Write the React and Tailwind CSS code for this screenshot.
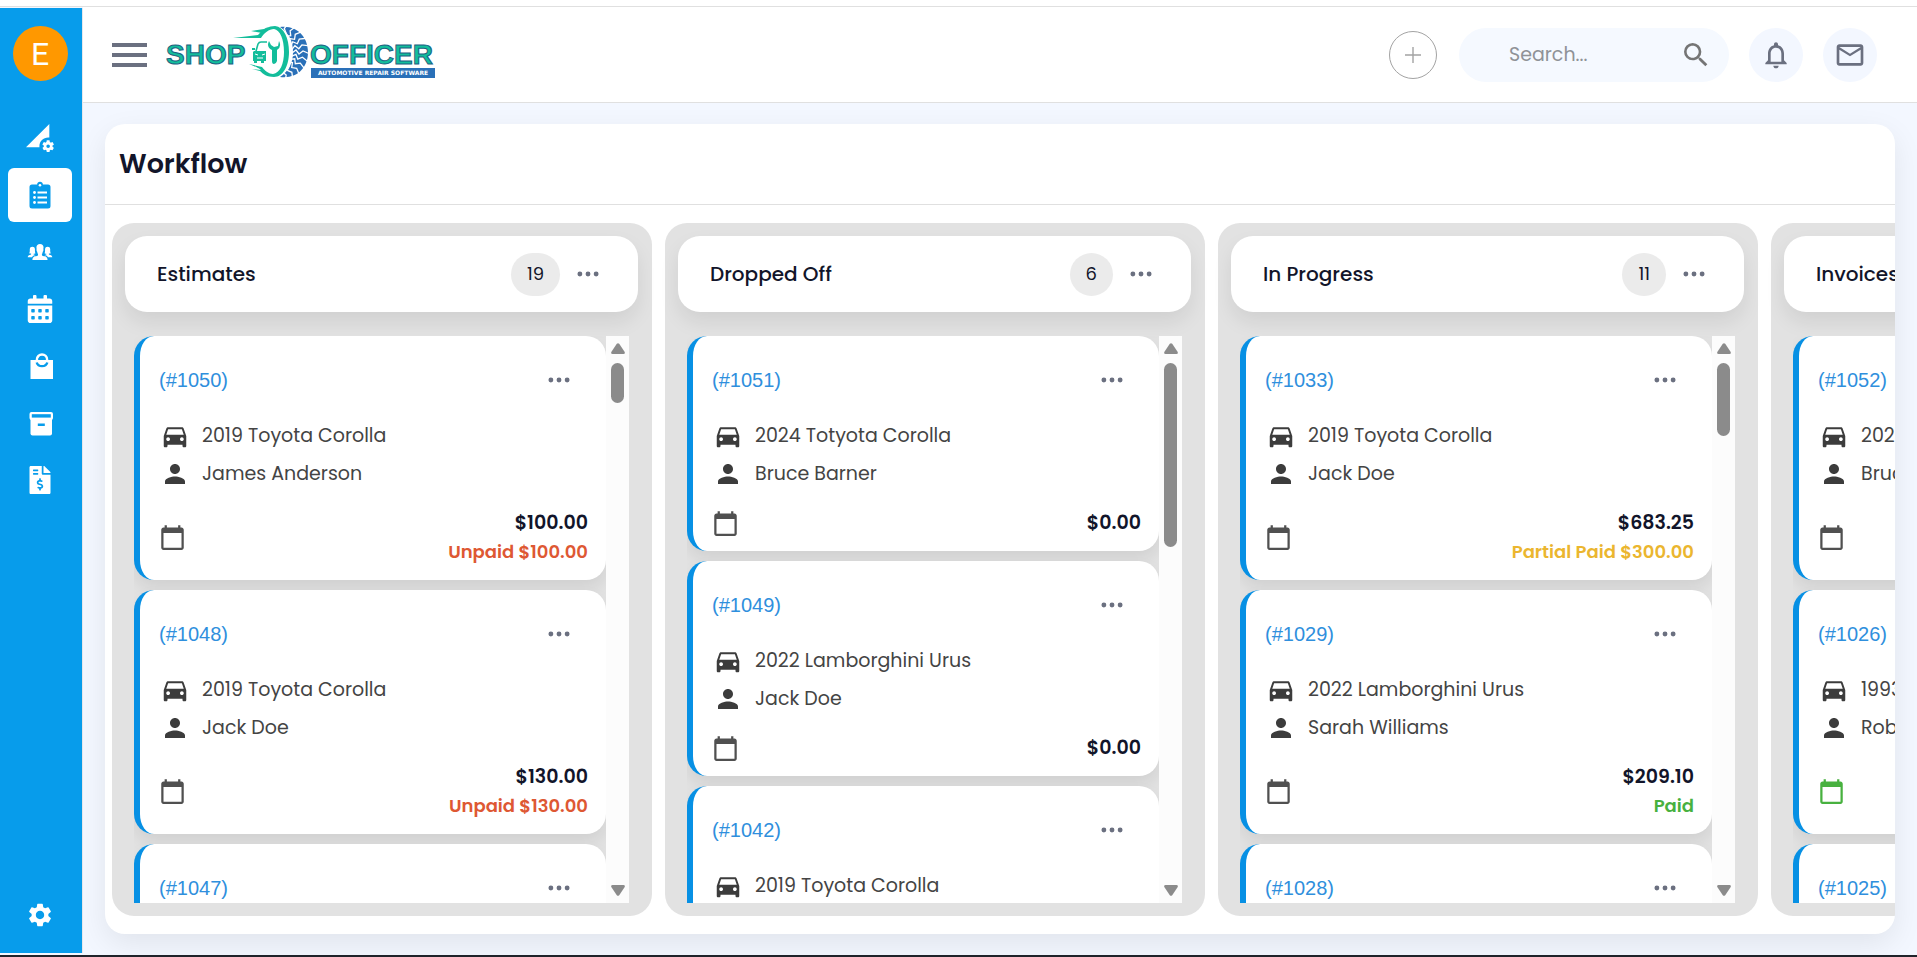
import {
  MdPermDataSetting,
  MdSettings,
  MdSearch,
  MdNotificationsNone,
  MdMailOutline,
  MdDirectionsCar,
  MdPerson,
  MdCalendarToday,
} from "react-icons/md";
import { FaCalendarAlt, FaFileInvoiceDollar } from "react-icons/fa";
import { BsThreeDots } from "react-icons/bs";
import { IoIosPeople } from "react-icons/io";

const ClipboardIcon = () => (
  <svg viewBox="0 0 28 28" className="w-7 h-7">
    <path
      d="M14 .8a3 3 0 0 1 2.9 2.7H22a2.5 2.5 0 0 1 2.5 2.5V25a2.5 2.5 0 0 1-2.5 2.5H6A2.5 2.500 0 0 1 3.5 25V6A2.5 2.5 0 0 1 6 3.5H11.1A3 3 0 0 1 14 .8Z"
      fill="currentColor"
    />
    <g fill="#fff">
      <circle cx="14" cy="4.2" r="1.3" />
      <rect x="11.5" y="10.5" width="9.5" height="2" />
      <rect x="11.5" y="15.5" width="9.5" height="2" />
      <rect x="11.5" y="20.5" width="9.5" height="2" />
      <circle cx="8.5" cy="11.5" r="1.4" />
      <circle cx="8.5" cy="16.5" r="1.4" />
      <circle cx="8.5" cy="21.5" r="1.4" />
    </g>
  </svg>
);

const BagIcon = () => (
  <svg viewBox="0 0 28 28" className="w-7 h-7">
    <path d="M4.5 8H27V27H4.5Z" fill="currentColor" />
    <circle cx="16" cy="7.5" r="5" fill="none" stroke="currentColor" strokeWidth="2.6" />
    <path d="M12.3 8a3.7 4 0 0 1 7.4 0Z" fill="#079ceb" />
    <path d="M10.7 10.5a5.5 5 0 0 0 10.6 0" fill="none" stroke="#079ceb" strokeWidth="2.4" />
  </svg>
);

const ArchiveIcon = () => (
  <svg viewBox="0 0 28 28" className="w-7 h-7" fill="currentColor">
    <path d="M4.5 9H26V24.5a2 2 0 0 1-2 2H6.5a2 2 0 0 1-2-2V9Z" />
    <rect x="3.5" y="3" width="23.5" height="8" rx="2" />
    <rect x="5.8" y="5.2" width="19" height="3.4" fill="#079ceb" />
    <rect x="11.8" y="14.5" width="7" height="2.5" fill="#079ceb" />
  </svg>
);

const navLinks = [
  { name: "Dashboard", path: "/dashboard", icon: <MdPermDataSetting className="w-7 h-7" /> },
  { name: "Workflow", path: "/workflow", icon: <ClipboardIcon />, active: true },
  { name: "Customers", path: "/customers", icon: <IoIosPeople className="w-7 h-7" /> },
  { name: "Calendar", path: "/calendar", icon: <FaCalendarAlt className="w-7 h-7" /> },
  { name: "Orders", path: "/orders", icon: <BagIcon /> },
  { name: "Inventory", path: "/inventory", icon: <ArchiveIcon /> },
  { name: "Invoices", path: "/invoices", icon: <FaFileInvoiceDollar className="w-7 h-7" /> },
];

const columns = [
  {
    title: "Estimates",
    count: 19,
    thumb: "h-10",
    cards: [
      { id: 1050, car: "2019 Toyota Corolla", customer: "James Anderson", total: "$100.00", status: "unpaid", note: "Unpaid $100.00" },
      { id: 1048, car: "2019 Toyota Corolla", customer: "Jack Doe", total: "$130.00", status: "unpaid", note: "Unpaid $130.00" },
      { id: 1047, car: "2022 Lamborghini Urus", customer: "Jack Doe", total: "$0.00" },
    ],
  },
  {
    title: "Dropped Off",
    count: 6,
    thumb: "h-[184px]",
    cards: [
      { id: 1051, car: "2024 Totyota Corolla", customer: "Bruce Barner", total: "$0.00" },
      { id: 1049, car: "2022 Lamborghini Urus", customer: "Jack Doe", total: "$0.00" },
      { id: 1042, car: "2019 Toyota Corolla", customer: "Jack Doe", total: "$0.00" },
    ],
  },
  {
    title: "In Progress",
    count: 11,
    thumb: "h-[73px]",
    cards: [
      { id: 1033, car: "2019 Toyota Corolla", customer: "Jack Doe", total: "$683.25", status: "partial", note: "Partial Paid $300.00" },
      { id: 1029, car: "2022 Lamborghini Urus", customer: "Sarah Williams", total: "$209.10", status: "paid", note: "Paid" },
      { id: 1028, car: "2019 Toyota Corolla", customer: "Jack Doe", total: "$0.00" },
    ],
  },
  {
    title: "Invoices",
    count: 14,
    thumb: "h-[73px]",
    cards: [
      { id: 1052, car: "2024 Totyota Corolla", customer: "Bruce Barner", total: "$0.00", status: "paid", note: "Paid" },
      { id: 1026, car: "1993 Toyota Corolla", customer: "Robert Doe", total: "$0.00", status: "paid", note: "Paid", scheduled: true },
      { id: 1025, car: "2019 Toyota Corolla", customer: "Jack Doe", total: "$0.00" },
    ],
  },
];

const noteColors = {
  unpaid: "text-[#de5833]",
  partial: "text-[#ebb62f]",
  paid: "text-[#48b13f]",
};

const treads = [-75, -60, -45, -30, -15, 0, 15, 30, 45, 60, 75];

const Logo = () => (
  <svg viewBox="0 0 270 54" className="w-[270px] h-[54px] mb-1" role="img" aria-label="Shop Officer">
    {/* Tire */}
    <path d="M114 1 C132 -1 142 12 142 26 C142 41 132 53 114 51 C123 45 127 37 127 26 C127 15 123 7 114 1Z" fill="#2a70b8" />
    {treads.map((deg) => (
      <path
        key={deg}
        d="M126 27 l4 -3 l3 4 l4 -3 l7 3"
        fill="none"
        stroke="#fff"
        strokeWidth="1.3"
        transform={`rotate(${deg} 113 26)`}
      />
    ))}
    {/* Rim and speed lines */}
    <path
      d="M67 12 L92 9 C97 3 103 0 109 0 C118 1 123 12 123 26 C123 40 117 51 108 51 C101 51 97 48 94 45 L86 43 L95 44 C91 41 90 41 83 38 L96 41 C99 45 103 48 107 48 C114 47 118 38 118 26 C118 13 114 4 108 3 C103 3 98 7 95 12 Z"
      fill="#13bd9b"
    />
    <path d="M85 5 L98 3 L102 1 L96 7Z" fill="#13bd9b" />
    {/* Car and wrench */}
    <path d="M90 25 l2 -7 q1 -2 3 -2 h6" fill="none" stroke="#13bd9b" strokeWidth="1.6" />
    <path
      d="M88 25 h12 v10 h-2 v2 h-3 v-2 h-4 v2 h-3 v-2 h-1 v-9z M86 22 h3 v2 h-3z M103 15 q-3 6 3 9 v11 q0 3 2 3 t3 -3 v-11 q5 -3 2 -9 l-1 5 l-4 1 l-3 -2z"
      fill="#13bd9b"
    />
    <path d="M89 28 l3 1 M99 28 l-3 1 M91 32 h6" stroke="#fff" strokeWidth="1" />
    <g
      fill="#13bd9b"
      stroke="#1c5f82"
      strokeWidth="1"
      fontFamily="'Liberation Sans', sans-serif"
      fontWeight="bold"
      fontSize="28"
    >
      <text x="0" y="38">SHOP</text>
      <text x="144" y="38">OFFICER</text>
    </g>
    <rect x="145" y="42" width="124" height="10" fill="#2a70b8" />
    <text x="207" y="49" fill="#fff" textAnchor="middle" fontFamily="'DejaVu Sans', sans-serif" fontWeight="bold" fontSize="6">
      AUTOMOTIVE REPAIR SOFTWARE
    </text>
  </svg>
);

const Sidebar = () => (
  <aside className="flex flex-col items-center w-[83px] shrink-0 mt-px mb-[2px] pt-[18px] pr-[2px] pb-6 bg-[#079ceb] border-r border-gray-200">
    <div className="flex items-center justify-center w-[55px] h-[55px] mb-[30px] rounded-full bg-[#ff9800] text-white font-['Roboto',sans-serif] text-[32px]">
      E
    </div>
    <nav className="flex flex-col items-center gap-[3px]">
      {navLinks.map((link) => (
        <a
          key={link.name}
          href={link.path}
          aria-label={link.name}
          className={
            link.active
              ? "flex items-center justify-center w-16 h-[54px] rounded-md bg-white text-[#079ceb]"
              : "flex items-center justify-center w-16 h-[54px] rounded-md text-white"
          }
        >
          {link.icon}
        </a>
      ))}
    </nav>
    <a href="/settings" aria-label="Settings" className="mt-auto text-white">
      <MdSettings className="w-7 h-7" />
    </a>
  </aside>
);

const Header = () => (
  <header className="flex items-center justify-between h-24 pl-[29px] pr-10 bg-white border-b border-[#e0e0e0]">
    <div className="flex items-center gap-[19px]">
      <button aria-label="Toggle menu" className="flex flex-col gap-[6px] w-[35px]">
        <span className="w-full h-1 bg-[#6b7080]" />
        <span className="w-full h-1 bg-[#6b7080]" />
        <span className="w-full h-1 bg-[#6b7080]" />
      </button>
      <Logo />
    </div>

    <div className="flex items-center">
      <button
        aria-label="Add"
        className="flex items-center justify-center w-12 h-12 mr-[22px] rounded-full border border-[#a3a3a3] text-[#a3a3a3]"
      >
        <svg viewBox="0 0 16 16" className="w-4 h-4" stroke="currentColor" strokeWidth="1.4">
          <path d="M8 0v16M0 8h16" />
        </svg>
      </button>
      <label className="flex items-center w-[270px] h-[54px] pl-[50px] pr-[17px] mr-5 rounded-full bg-[#f5f9ff]">
        <input
          type="text"
          aria-label="Search"
          placeholder="Search..."
          className="flex-1 min-w-0 h-[30px] bg-transparent text-[19px] leading-[30px] placeholder-[#8f9297] outline-none"
        />
        <MdSearch className="w-8 h-8 text-[#757575]" />
      </label>
      <button
        aria-label="Notifications"
        className="flex items-center justify-center w-[54px] h-[54px] mr-5 rounded-full bg-[#f3f7ff] text-[#6b7080]"
      >
        <MdNotificationsNone className="w-8 h-8" />
      </button>
      <button
        aria-label="Messages"
        className="flex items-center justify-center w-[54px] h-[54px] rounded-full bg-[#f3f7ff] text-[#6b7080]"
      >
        <MdMailOutline className="w-8 h-8" />
      </button>
    </div>
  </header>
);

const Card = ({ card }) => (
  <article className="shrink-0 pt-6 pb-[14px] pl-[19px] pr-[18px] bg-white border-l-[6px] border-[#0790e4] rounded-[20px] shadow-[0_8px_16px_rgba(0,0,0,0.08)]">
    <div className="flex items-center justify-between h-10 pr-4">
      <a href={`/orders/${card.id}`} className="font-['Liberation_Sans',Arial,sans-serif] text-xl text-[#2f8fdd]">
        (#{card.id})
      </a>
      <button aria-label="Card options" className="text-[#6b7080]">
        <BsThreeDots className="w-[26px] h-[26px]" />
      </button>
    </div>
    <div className="mt-[17px] text-[19px] leading-[30px] text-[#444]">
      <p className="flex items-center gap-3 h-[38px] pl-[1px]">
        <MdDirectionsCar className="w-[30px] h-[30px] text-[#3c3c3c]" />
        {card.car}
      </p>
      <p className="flex items-center gap-3 h-[38px] pl-[1px]">
        <MdPerson className="w-[30px] h-[30px] text-[#3c3c3c]" />
        {card.customer}
      </p>
    </div>
    <div className="flex items-center justify-between mt-4">
      <MdCalendarToday className={card.scheduled ? "w-[27px] h-[27px] text-[#48b13f]" : "w-[27px] h-[27px] text-[#505050]"} />
      <div className="text-right font-semibold">
        <p className="text-[19px] leading-[28px] text-[#12152a]">{card.total}</p>
        {card.note && <p className={`text-lg leading-[29px] ${noteColors[card.status]}`}>{card.note}</p>}
      </div>
    </div>
  </article>
);

const ScrollTrack = ({ thumb }) => (
  <div className="flex flex-col items-center w-[23px] shrink-0 py-[7px] bg-[#fcfcfc] text-[#8b8b8b]">
    <svg viewBox="0 0 14 11" className="w-[14px] h-[11px]" fill="currentColor">
      <path d="M5.8 .8Q7-.5 8.2.8L13.7 9Q14.3 11 12.5 11H1.5Q-.3 11 .3 9Z" />
    </svg>
    <div className={`w-[13px] mt-[9px] rounded-full bg-[#8b8b8b] ${thumb}`} />
    <svg viewBox="0 0 14 11" className="w-[14px] h-[11px] mt-auto" fill="currentColor">
      <path d="M5.8 10.2Q7 11.5 8.2 10.2L13.7 2Q14.3 0 12.5 0H1.5Q-.3 0 .3 2Z" />
    </svg>
  </div>
);

const Column = ({ column }) => (
  <section className="flex flex-col w-[540px] shrink-0 py-[13px] pl-[13px] pr-[14px] rounded-[22px] bg-[#e2e2e2]">
    <div className="flex items-center h-[76px] shrink-0 pl-8 pr-[37px] rounded-[22px] bg-white shadow-[0_10px_20px_rgba(0,0,0,0.08)]">
      <h2 className="flex-1 text-xl font-medium text-[#12152a]">{column.title}</h2>
      <span className="flex items-center h-[43px] px-4 mr-[15px] rounded-full bg-[#ebebeb] text-lg text-[#12152a]">
        {column.count}
      </span>
      <button aria-label="Column options" className="text-[#6b7080]">
        <BsThreeDots className="w-[26px] h-[26px]" />
      </button>
    </div>
    <div className="flex flex-1 min-h-0 mt-6 mx-[9px]">
      <div className="flex flex-col flex-1 gap-[10px] overflow-y-auto [scrollbar-width:none]">
        {column.cards.map((card) => (
          <Card key={card.id} card={card} />
        ))}
      </div>
      <ScrollTrack thumb={column.thumb} />
    </div>
  </section>
);

const App = () => {
  return (
    <div className="flex flex-col h-screen bg-[#f3f7ff] font-['Poppins','Inter',sans-serif] border-b-2 border-[#20242b]">
      <div className="h-[7px] shrink-0 bg-white border-b border-[#e0e0e0]" />
      <div className="flex flex-1 min-h-0">
        <Sidebar />
        <div className="flex flex-col flex-1 min-w-0">
          <Header />
          <main className="flex flex-1 min-h-0 pt-[21px] pb-[21px] pl-[22px] pr-[22px]">
            <div className="flex flex-col flex-1 min-w-0 overflow-hidden rounded-[20px] bg-white shadow-[0_10px_30px_rgba(0,0,0,0.08)]">
              <h1 className="flex items-center h-[81px] shrink-0 pl-[14px] border-b border-[#e0e0e0] text-[27px] font-semibold text-[#12152a]">
                Workflow
              </h1>
              <div className="flex flex-1 min-h-0 gap-[13px] pl-[7px] pt-[18px] pb-[18px] overflow-x-auto [scrollbar-width:none]">
                {columns.map((column) => (
                  <Column key={column.title} column={column} />
                ))}
              </div>
            </div>
          </main>
        </div>
      </div>
    </div>
  );
};

export default App;
